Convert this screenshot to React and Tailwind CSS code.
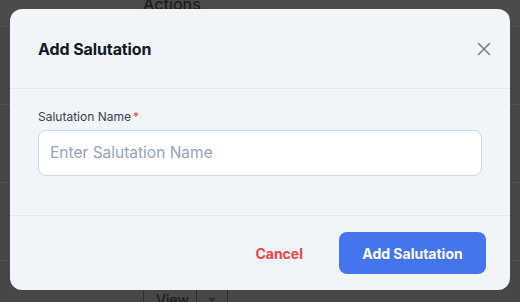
import React from "react";

export default function App() {
  return (
    <div
      className="relative w-[520px] h-[302px] overflow-hidden bg-[#474747]"
      style={{ fontFamily: "Inter, 'Noto Sans', sans-serif" }}
    >
      {/* underlying page (dimmed) */}
      <div className="flex flex-col">
        <div className="h-[27px] border-b border-[#525252] bg-[#4a4a4a] pl-[143px]">
          <div className="text-[16px] font-medium text-[#1c1c1c] leading-none -mt-[4px]">Actions</div>
        </div>
        <div className="h-[78px] border-b border-[#525252]" />
        <div className="h-[78px] border-b border-[#525252]" />
        <div className="h-[78px] border-b border-[#525252]" />
        <div className="pl-[143px] pt-[28px]">
          <div className="flex h-[20px] w-[85px] border-x border-[#2e2e2e]">
            <div className="w-[53px] border-r border-[#2e2e2e] pl-[12px] text-[14px] font-medium text-[#1c1c1c]">View</div>
            <div className="flex-1 flex justify-center pt-[9px]">
              <div className="w-0 h-0 border-x-[4px] border-x-transparent border-t-[4px] border-t-[#2e2e2e]" />
            </div>
          </div>
        </div>
      </div>

      {/* modal */}
      <div className="absolute inset-0 pl-[10px] pt-[9px]">
        <div className="w-[500px] h-[281px] rounded-[12px] bg-[#f1f4f9] flex flex-col">
          <div className="h-[80px] border-b border-[#e2e7ee] flex items-center justify-between pl-[28px] pr-[19px]">
            <div className="text-[16px] font-bold text-[#111827] tracking-[-0.1px]">Add Salutation</div>
            <svg width="14" height="14" viewBox="0 0 14 14" className="text-[#64748b]">
              <path d="M1.5 1.5 L12.5 12.5 M12.5 1.5 L1.5 12.5" stroke="currentColor" strokeWidth="1.4" strokeLinecap="round" />
            </svg>
          </div>
          <div className="h-[127px] border-b border-[#e2e7ee] px-[28px] pt-[20px]">
            <div className="text-[12px] text-[#374151] leading-[16px] flex">
              Salutation Name<span className="text-[#ef4444] ml-[2px]">*</span>
            </div>
            <div className="mt-[5px] h-[46px] w-[444px] rounded-[8px] border border-[#cfd6e2] bg-white flex items-center pl-[11px] text-[15.5px] text-[#94a3b8]">
              Enter Salutation Name
            </div>
          </div>
          <div className="flex-1 flex items-center justify-end pr-[24px]">
            <div className="text-[14px] font-bold text-[#ef4444] mr-[36px]">Cancel</div>
            <div className="w-[147px] h-[42px] rounded-[8px] bg-[#4475ee] text-white text-[14px] font-bold flex items-center justify-center">
              Add Salutation
            </div>
          </div>
        </div>
      </div>
    </div>
  );
}
